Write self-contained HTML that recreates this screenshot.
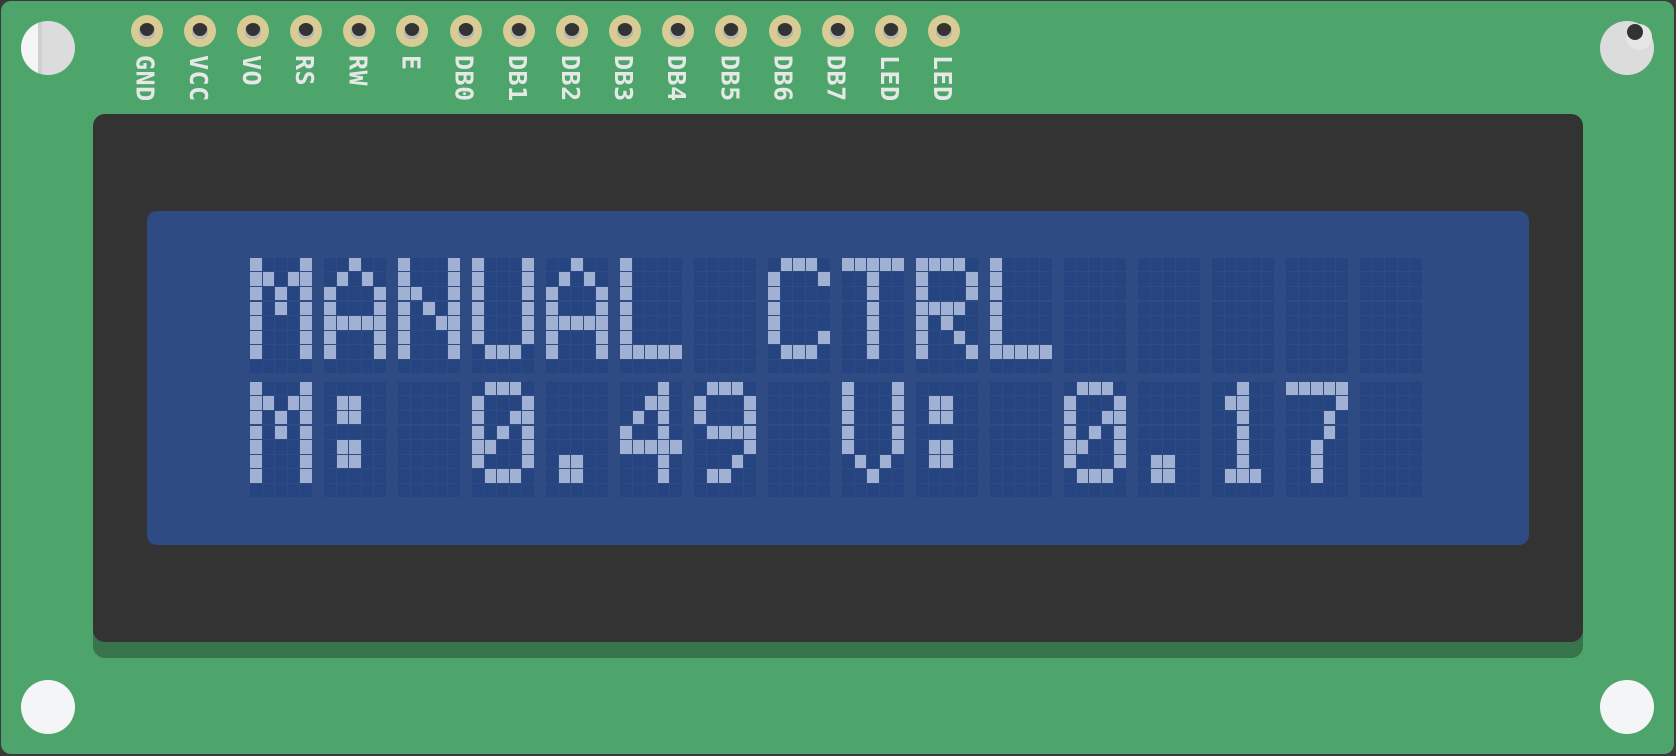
<!DOCTYPE html>
<html><head><meta charset="utf-8"><style>
html,body{margin:0;padding:0;width:1676px;height:756px;overflow:hidden;background:#3a3a3a}
#board{position:absolute;left:1px;top:1px;width:1673px;height:753px;background:#4ea56c;border-radius:10px}
.hole{position:absolute;width:54px;height:54px;border-radius:50%;background:#f4f5f7}
.pin{position:absolute;width:32px;height:32px;border-radius:50%;background:#d8cc94}
.pin i{position:absolute;left:8px;top:8px;width:16px;height:16px;border-radius:50%;background:#333;box-shadow:0 -2px 0 1px #b8b8b8 inset}
.lbl{position:absolute;top:55px;writing-mode:vertical-rl;font-family:"DejaVu Sans Mono",monospace;font-size:25px;font-weight:bold;letter-spacing:0.5px;color:#e6e8e6;line-height:1;width:22px}
#shadow{position:absolute;left:93px;top:130px;width:1490px;height:528px;background:#37744b;border-radius:12px}
#bezel{position:absolute;left:93px;top:114px;width:1490px;height:528px;background:#333;border-radius:12px}
#panel{position:absolute;left:147px;top:211px;width:1382px;height:334px;background:#2e4b83;border-radius:10px}
.c{position:absolute;width:11.5px;height:13.6px;background:#264580}
.c.on{background:#a0b1d3}
</style></head><body>
<div id="board"></div>
<div class="hole" style="left:21px;top:21px;background:linear-gradient(90deg,#f4f5f7 0,#f4f5f7 17px,#cfcfcf 17px,#cfcfcf 21px,#dcdcdc 21px)"></div>
<div class="hole" style="left:1600px;top:21px;background:#dcdcdc"><div style="position:absolute;left:26px;top:3px;width:26px;height:26px;border-radius:50%;background:#e6e6e6"></div><div style="position:absolute;left:27px;top:3px;width:16px;height:16px;border-radius:50%;background:#333"></div></div>
<div class="hole" style="left:21px;top:680px"></div>
<div class="hole" style="left:1600px;top:680px"></div>
<div id="pins"></div>
<div id="shadow"></div>
<div id="bezel"></div>
<div id="panel"></div>
<div id="lcd"></div>
<script>
var names=["GND","VCC","VO","RS","RW","E","DB0","DB1","DB2","DB3","DB4","DB5","DB6","DB7","LED","LED"];
var h="";
for(var i=0;i<16;i++){var x=146.7+53.15*i;
h+='<div class="pin" style="left:'+(x-16)+'px;top:15px"><i></i></div>';
h+='<div class="lbl" style="left:'+(x-11)+'px">'+names[i]+'</div>';}
document.getElementById("pins").innerHTML=h;
var F={
"M":["10001","11011","10101","10101","10001","10001","10001"],
"A":["00100","01010","10001","10001","11111","10001","10001"],
"N":["10001","10001","11001","10101","10011","10001","10001"],
"U":["10001","10001","10001","10001","10001","10001","01110"],
"L":["10000","10000","10000","10000","10000","10000","11111"],
"C":["01110","10001","10000","10000","10000","10001","01110"],
"T":["11111","00100","00100","00100","00100","00100","00100"],
"R":["11110","10001","10001","11110","10100","10010","10001"],
":":["00000","01100","01100","00000","01100","01100","00000"],
"0":["01110","10001","10011","10101","11001","10001","01110"],
".":["00000","00000","00000","00000","00000","01100","01100"],
"4":["00010","00110","01010","10010","11111","00010","00010"],
"9":["01110","10001","10001","01111","00001","00010","01100"],
"V":["10001","10001","10001","10001","10001","01010","00100"],
"1":["00100","01100","00100","00100","00100","00100","01110"],
"7":["11111","00001","00010","00010","00100","00100","00100"],
" ":["00000","00000","00000","00000","00000","00000","00000"]};
var lines=["MANUAL CTRL     ","M: 0.49 V: 0.17 "];
var s="";
for(var l=0;l<2;l++)for(var c=0;c<16;c++){var g=F[lines[l][c]];
for(var r=0;r<8;r++)for(var k=0;k<5;k++){var on=r<7&&g[r][k]=="1";
s+='<div class="c'+(on?' on':'')+'" style="left:'+(250+c*74+k*12.5)+'px;top:'+(257.7+l*124+r*14.6)+'px"></div>';}}
document.getElementById("lcd").innerHTML=s;
</script>
</body></html>
